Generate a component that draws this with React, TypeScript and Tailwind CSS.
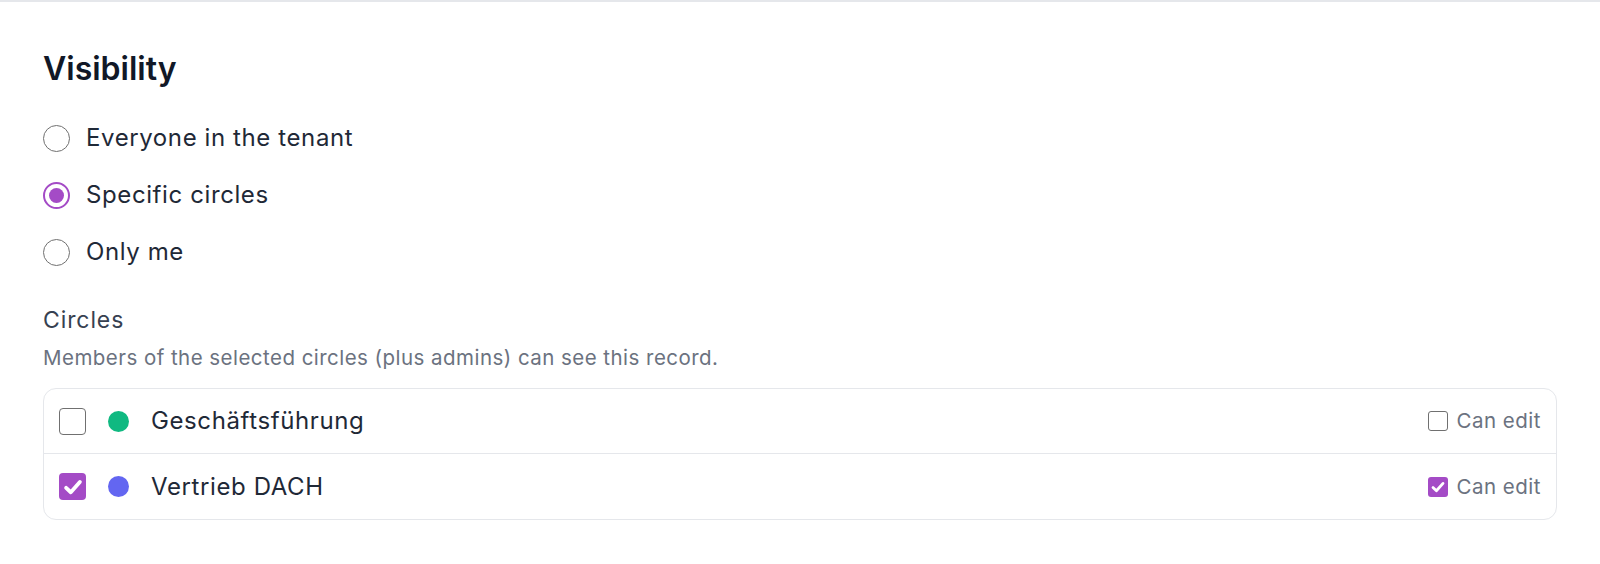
import { useState } from "react";

type Visibility = "everyone" | "circles" | "me";

const PURPLE = "bg-[#a44bc6]";

function Radio({ checked }: { checked: boolean }) {
  if (checked) {
    return (
      <span className="w-[27px] h-[27px] rounded-full border-2 border-[#a44bc6] flex items-center justify-center shrink-0">
        <span className={`w-[15px] h-[15px] rounded-full ${PURPLE}`} />
      </span>
    );
  }
  return <span className="w-[27px] h-[27px] rounded-full border-[1.5px] border-[#707070] shrink-0" />;
}

function Check({ checked, size }: { checked: boolean; size: "lg" | "sm" }) {
  const box = size === "lg" ? "w-[27px] h-[27px] rounded-[4px]" : "w-[20px] h-[20px] rounded-[3px]";
  if (!checked) {
    return <span className={`${box} border-[1.5px] border-[#707070] bg-white shrink-0`} />;
  }
  return (
    <span className={`${box} ${PURPLE} flex items-center justify-center shrink-0`}>
      <svg viewBox="0 0 16 16" className={size === "lg" ? "w-[22px] h-[22px]" : "w-[16px] h-[16px]"}>
        <path d="M3 8.6 L6.4 11.8 L13 4.4" fill="none" stroke="white" strokeWidth="2.8" strokeLinecap="round" strokeLinejoin="round" />
      </svg>
    </span>
  );
}

const circles = [
  { name: "Geschäftsführung", color: "bg-[#10b981]", selected: false, canEdit: false },
  { name: "Vertrieb DACH", color: "bg-[#6366f1]", selected: true, canEdit: true },
];

export default function App() {
  const [vis, setVis] = useState<Visibility>("circles");

  const options: { id: Visibility; label: string }[] = [
    { id: "everyone", label: "Everyone in the tenant" },
    { id: "circles", label: "Specific circles" },
    { id: "me", label: "Only me" },
  ];

  return (
    <div className="min-h-screen bg-white border-t-2 border-[#e5e7eb] px-[43px] pt-[47px] font-['Inter',sans-serif]">
      <h2 className="text-[32px] leading-[40px] font-semibold text-[#111827]">Visibility</h2>

      <div className="mt-[35px] flex flex-col gap-[29px]">
        {options.map((o) => (
          <button
            key={o.id}
            onClick={() => setVis(o.id)}
            className="flex items-center gap-[16px] h-[28px] text-left"
          >
            <Radio checked={vis === o.id} />
            <span className="text-[24px] leading-[28px] tracking-[0.6px] text-[#1f2937]">{o.label}</span>
          </button>
        ))}
      </div>

      <div className="mt-[40px] text-[23px] leading-[28px] tracking-[0.9px] text-[#374151]">Circles</div>
      <p className="mt-[10px] text-[20.5px] leading-[28px] tracking-[0.46px] text-[#6b7280]">
        Members of the selected circles (plus admins) can see this record.
      </p>

      <div className="mt-[16px] border border-[#e5e7eb] rounded-[13px] divide-y divide-[#e5e7eb]">
        {circles.map((c) => (
          <div key={c.name} className="h-[65px] flex items-center pl-[15px] pr-[15px]">
            <Check checked={c.selected} size="lg" />
            <span className={`ml-[22px] w-[21px] h-[21px] rounded-full ${c.color}`} />
            <span className="ml-[22px] text-[24px] leading-[28px] tracking-[0.6px] text-[#1f2937]">{c.name}</span>
            <div className="ml-auto flex items-center gap-[8px]">
              <Check checked={c.canEdit} size="sm" />
              <span className="text-[20.5px] leading-[28px] tracking-[0.5px] text-[#6b7280]">Can edit</span>
            </div>
          </div>
        ))}
      </div>
    </div>
  );
}
